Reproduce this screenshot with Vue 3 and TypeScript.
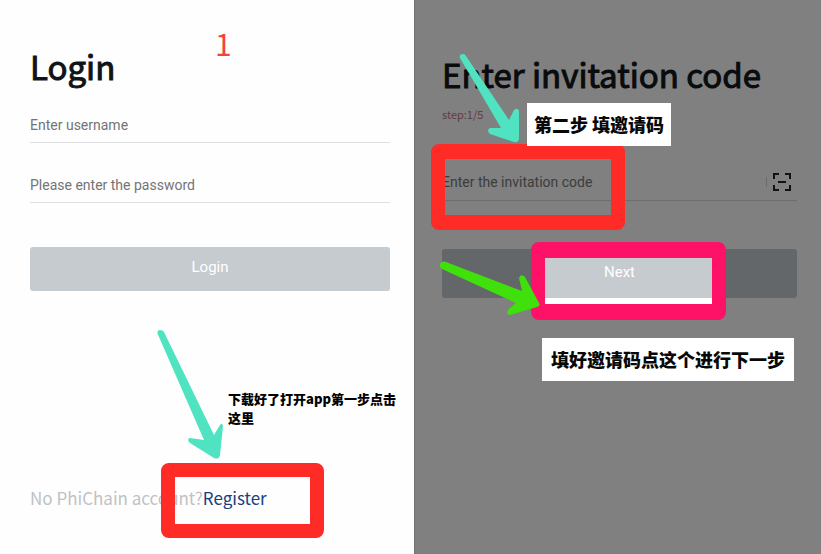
<script setup lang="ts">
import { ref } from 'vue'

const username = ref('')
const password = ref('')
const invitationCode = ref('')
</script>

<template>
  <main class="guide">
    <section class="panel login">
      <h1 class="title">Login</h1>
      <form class="form" @submit.prevent>
        <input v-model="username" class="field" type="text" placeholder="Enter username" aria-label="Enter username" />
        <input v-model="password" class="field" type="password" placeholder="Please enter the password" aria-label="Please enter the password" />
        <button class="submit" type="submit"><span class="submit-text">Login</span></button>
      </form>
      <p class="signup">No PhiChain account?<a class="signup-link" href="#register">Register</a></p>

      <span class="step-number">1</span>
      <p class="note">下载好了打开app第一步点击这里</p>
      <svg class="arrow arrow-register" viewBox="0 0 67 131" aria-hidden="true">
        <path d="M0.5 4.5Q0 1 3 1Q6 1 7 3L57 106L63 96Q65 93 66 97L63 126Q62 131 57 129L33 114Q29 110 33 109L47 111Z" />
      </svg>
      <div class="frame frame-register"></div>
    </section>

    <section class="panel invite">
      <h1 class="title">Enter invitation code</h1>
      <p class="progress">step:1/5</p>
      <form class="form" @submit.prevent>
        <div class="code-row">
          <input v-model="invitationCode" class="code-input" type="text" placeholder="Enter the invitation code" aria-label="Enter the invitation code" />
          <span class="divider"></span>
          <button class="scan" type="button" aria-label="Scan code">
            <svg viewBox="0 0 20 20" aria-hidden="true">
              <path d="M2 7V2H7M13 2H18V7M18 13V18H13M7 18H2V13M6 10H14" />
            </svg>
          </button>
        </div>
        <button class="submit" type="submit"><span class="submit-text">Next</span></button>
      </form>

      <div class="frame frame-code"></div>
      <div class="frame frame-next"></div>
      <svg class="arrow arrow-code" viewBox="0 0 60 90" aria-hidden="true">
        <path d="M1 5Q0 1 4 1Q6 1 7 3L50 67L55 57Q59 54 60 58V86Q59 90 55 89L31 81Q27 77 31 75L42 75Z" />
      </svg>
      <svg class="arrow arrow-next" viewBox="0 0 102 56" aria-hidden="true">
        <path d="M1 7Q0 3 3 2Q5 1 7 2L83 31L80 18Q82 13 86 17L100 43Q102 46 98 47L71 55Q66 54 70 49L77 43L3 9Z" />
      </svg>
      <p class="callout callout-code">第二步 填邀请码</p>
      <p class="callout callout-next">填好邀请码点这个进行下一步</p>
    </section>
  </main>
</template>

<style>
body {
  margin: 0;
}
</style>

<style scoped>
.guide {
  display: grid;
  grid-template-columns: 414fr 407fr;
  min-height: 100vh;
  font-family: "Noto Sans CJK SC", sans-serif;
}

.guide * {
  box-sizing: border-box;
}

.panel {
  position: relative;
  display: flex;
  flex-direction: column;
  min-width: 0;
}

.login {
  padding: 40px 24px 40px 30px;
  background: #fefefe;
}

.invite {
  padding: 48px 24px 40px 27px;
  background: #808080;
  border-left: 1px solid #707070;
}

.title {
  margin: 0;
  font-size: 33px;
  font-weight: 400;
  line-height: 52px;
  color: #101418;
  white-space: nowrap;
  -webkit-text-stroke: 1px currentColor;
}

.invite .title {
  color: #090b0d;
}

.form {
  display: flex;
  flex-direction: column;
}

.field,
.code-input {
  width: 100%;
  min-width: 0;
  padding: 0;
  border: 0;
  border-radius: 0;
  outline: 0;
  background: transparent;
  font: 14px/20px Roboto, sans-serif;
}

.field {
  height: 36px;
  margin-bottom: 24px;
  border-bottom: 1px solid #dedfe1;
}

.login .form {
  padding-top: 15px;
}

.field::placeholder {
  color: #747474;
  opacity: 1;
}

.submit {
  height: 44px;
  margin-top: 20px;
  padding: 0 0 4px;
  border: 0;
  border-radius: 3px;
  background: #c6cbd0;
  font: 15px/20px Roboto, sans-serif;
  color: #fff;
}

.signup {
  margin: auto 0 0;
  font-size: 17px;
  line-height: 32px;
  color: #bec2c5;
  white-space: nowrap;
}

.signup-link {
  color: #183f7c;
  text-decoration: none;
}

.progress {
  margin: 4px 0 0;
  font-size: 11px;
  line-height: 20px;
  color: #613b43;
}

.code-row {
  display: flex;
  align-items: center;
  height: 38px;
  margin-top: 39px;
  border-bottom: 1px solid #6c6e6f;
}

.code-input::placeholder {
  color: #3c3c3c;
  opacity: 1;
}

.divider {
  width: 1px;
  height: 10px;
  flex: none;
  background: #6b6b6b;
}

.scan {
  flex: none;
  width: 30px;
  height: 20px;
  padding: 0 5px;
  border: 0;
  background: none;
}

.scan svg {
  display: block;
  width: 20px;
  height: 20px;
  fill: none;
  stroke: #101214;
  stroke-width: 2;
}

.invite .submit {
  height: 49px;
  margin-top: 48px;
  background: #636769;
}

.invite .submit-text {
  position: relative;
  z-index: 2;
}

.frame {
  position: absolute;
  border: 14px solid #fe2b26;
  border-radius: 8px;
}

.frame-register {
  left: 161px;
  top: 463px;
  width: 163px;
  height: 75px;
}

.frame-code {
  left: 16px;
  top: 144px;
  width: 194px;
  height: 86px;
  border-width: 15px 14px;
}

.frame-next {
  z-index: 1;
  left: 116px;
  top: 242px;
  width: 195px;
  height: 78px;
  border-width: 16px 14px;
  border-color: #fd1267;
  background: linear-gradient(#c6cbd0 40px, #fff 40px) padding-box;
}

.arrow {
  position: absolute;
  z-index: 3;
  fill: #4fe3c1;
}

.arrow-register {
  left: 157px;
  top: 329px;
  width: 67px;
  height: 131px;
}

.arrow-code {
  left: 44px;
  top: 53px;
  width: 60px;
  height: 90px;
}

.arrow-next {
  left: 24px;
  top: 260px;
  width: 102px;
  height: 56px;
  fill: #3fe00c;
}

.step-number {
  position: absolute;
  left: 215px;
  top: 22px;
  font-size: 30px;
  line-height: 42px;
  color: #f6413f;
}

.note {
  position: absolute;
  left: 228px;
  top: 389px;
  width: 176px;
  margin: 0;
  font-size: 13px;
  font-weight: 900;
  line-height: 19px;
  color: #000;
}

.callout {
  position: absolute;
  z-index: 3;
  margin: 0;
  padding: 0 7px;
  background: #fff;
  font-size: 18px;
  font-weight: 900;
  line-height: 43px;
  color: #080808;
  white-space: nowrap;
}

.callout-code {
  left: 112px;
  top: 103px;
}

.callout-next {
  left: 127px;
  top: 338px;
  padding: 0 9px;
}
</style>
